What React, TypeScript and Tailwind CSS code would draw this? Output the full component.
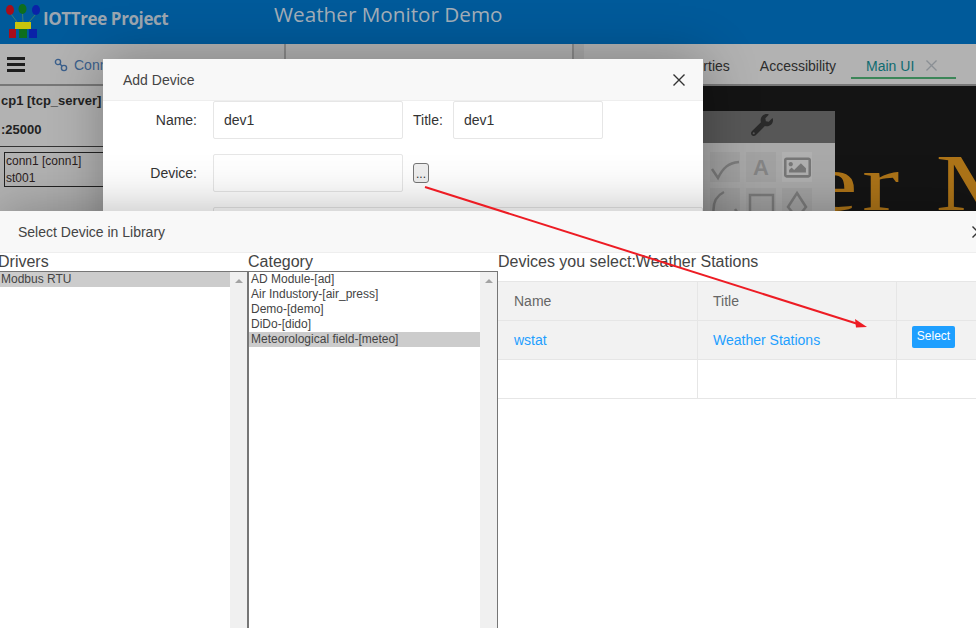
import React from 'react';
import { FaWrench, FaRegImage } from 'react-icons/fa';

const CloseX = ({ size = 12, color = '#333' }: { size?: number; color?: string }) => (
  <svg width={size} height={size} viewBox="0 0 12 12" fill="none" stroke={color} strokeWidth="1.4">
    <path d="M0.5 0.5 L11.5 11.5 M11.5 0.5 L0.5 11.5" />
  </svg>
);

const Logo = () => (
  <svg width="36" height="36" viewBox="0 0 36 36" className="shrink-0">
    <path d="M5 10 L11 18 M16.500 9 L17 18 M30 10 L23 18" stroke="#3f7f6f" strokeWidth="1" fill="none" />
    <ellipse cx="4" cy="6" rx="4" ry="5" fill="#a80d1a" />
    <ellipse cx="16.500" cy="5" rx="4" ry="5" fill="#0d6e1e" />
    <ellipse cx="30" cy="6" rx="4" ry="5" fill="#0a22a8" />
    <rect x="9" y="18" width="16" height="7" fill="#c8c40c" />
    <rect x="3" y="25" width="7" height="9" fill="#a80d1a" />
    <rect x="13" y="25" width="8" height="9" fill="#0d6e1e" />
    <rect x="23" y="25" width="8" height="9" fill="#0a22a8" />
  </svg>
);

const ScrollTrack = () => (
  <div className="w-[17px] shrink-0 bg-[#f0f0f0] flex justify-center pt-[7px]">
    <div className="w-0 h-0 border-l-[4px] border-r-[4px] border-b-[4px] border-l-transparent border-r-transparent border-b-[#a3a3a3]" />
  </div>
);

const ListBox = ({ items, selected, className }: { items: string[]; selected: string; className: string }) => (
  <div className={`flex h-[357px] border border-[#767676] border-b-0 ${className}`}>
    <div className="flex-1 text-[12px] leading-[15px] text-[#444]">
      {items.map((item) => (
        <div key={item} className={`h-[15px] pl-[2px] whitespace-nowrap ${item === selected ? 'bg-[#cccccc]' : ''}`}>
          {item}
        </div>
      ))}
    </div>
    <ScrollTrack />
  </div>
);

const Field = ({ value, className }: { value?: string; className: string }) => (
  <div className={`h-[38px] border border-[#e6e6e6] rounded-[2px] bg-white pl-[10px] text-[14px] leading-[36px] text-[#333] ${className}`}>
    {value}
  </div>
);

const ToolCell = ({ children, light }: { children?: React.ReactNode; light?: boolean }) => (
  <div className={`w-[30px] h-[30px] flex items-center justify-center ${light ? 'bg-[#b0b0b0]' : 'bg-[#a2a2a2]'}`}>{children}</div>
);

export default function App() {
  return (
    <div className="relative w-[976px] h-[628px] overflow-hidden bg-[#b2b2b2] font-['Liberation_Sans',Arial,sans-serif]">
      <div className="flex items-start h-[44px] bg-[#005a9a]">
        <div className="flex items-start pl-[6px] pt-[4px] w-[274px]">
          <Logo />
          <span className="ml-px mt-[2px] text-[17px] leading-[26px] font-bold text-[#9ca6b0] font-['Open_Sans',sans-serif] tracking-[-0.4px]">IOTTree Project</span>
        </div>
        <span className="text-[20.700px] leading-[29px] text-[#a3aeb8] font-['Open_Sans',sans-serif]">Weather Monitor Demo</span>
      </div>

      <div className="flex h-[584px]">
        <div className="w-[286px] shrink-0 border-r-2 border-[#8a8a8a]">
          <div className="flex items-center h-[42px] border-b-2 border-[#777] pl-[7px]">
            <div className="flex flex-col gap-[3px] w-[18px]">
              <div className="h-[3px] bg-[#1d1d1d]" />
              <div className="h-[3px] bg-[#1d1d1d]" />
              <div className="h-[3px] bg-[#1d1d1d]" />
            </div>
            <svg width="14" height="14" viewBox="0 0 14 14" fill="none" stroke="#3a5f8c" strokeWidth="1.4" className="ml-[29px] mt-[2px]">
              <circle cx="4" cy="4" r="2.6" />
              <circle cx="10" cy="10" r="2.600" />
              <path d="M6 6 L8 8" />
            </svg>
            <span className="ml-[6px] pt-[3px] text-[14px] text-[#3a5f8c]">Connections</span>
          </div>
          <div className="h-[29px] pl-px text-[13px] font-bold leading-[29px] text-[#222] whitespace-nowrap">cp1 [tcp_server]</div>
          <div className="h-[31px] pl-px text-[13px] font-bold leading-[30px] text-[#222]">:25000</div>
          <div className="border-t border-[#333] pt-[5px] pl-[4px]">
            <div className="w-[130px] h-[35px] border border-[#222] text-[12px] leading-[17px] text-[#2a1c1c] pl-px">
              <div>conn1 [conn1]</div>
              <div>st001</div>
            </div>
          </div>
        </div>

        <div className="w-[288px] shrink-0 border-r-2 border-[#8a8a8a]" />
        <div className="w-[10px] shrink-0 bg-[#a8a8a8]" />

        <div className="flex-1 flex flex-col">
          <div className="flex h-[42px] border-b-2 border-[#777] pl-[67px] text-[14px] text-[#2c2c2c]">
            <div className="px-[15px] pt-[12px] whitespace-nowrap">Properties</div>
            <div className="px-[15px] pt-[12px] whitespace-nowrap">Accessibility</div>
            <div className="w-[105px] h-[35px] border-b-2 border-[#3c8658] pl-[15px] pt-[12px] flex items-start text-[#0f6b70] whitespace-nowrap">
              Main UI
              <span className="ml-[12px] mt-[4px]"><CloseX size={11} color="#8a8f94" /></span>
            </div>
          </div>
          <div className="relative flex-1 bg-[#141414] overflow-hidden">
            <div className="absolute left-[224px] top-[54px] origin-left scale-x-[1.4] text-[80px] leading-[86px] tracking-[3px] text-[#ad7418] whitespace-nowrap font-['Liberation_Serif',serif]">er M</div>
            <div className="absolute left-[119px] top-[25px] w-[132px] h-[200px] bg-[#a9a9a9]">
              <div className="h-[32px] bg-[#575757] flex justify-end pr-[62px] pt-[3px] text-[#2a2a2a]">
                <FaWrench size={22} />
              </div>
              <div className="grid grid-cols-[30px_30px_30px] gap-[6px] pl-[7px] pt-[9px]">
                <ToolCell>
                  <svg width="30" height="30" viewBox="0 0 30 30" fill="none" stroke="#7c7c7c" strokeWidth="2.5">
                    <path d="M2 17 L8 26 C13 16 18 11 29 10" />
                  </svg>
                </ToolCell>
                <ToolCell><span className="text-[22px] font-bold text-[#858585]">A</span></ToolCell>
                <ToolCell light><FaRegImage size={27} color="#777" /></ToolCell>
                <ToolCell>
                  <svg width="30" height="30" viewBox="0 0 30 30" fill="none" stroke="#7c7c7c" strokeWidth="2.5">
                    <path d="M14 4 C6 8 2 16 4 28" />
                    <path d="M25 21 L27 24" />
                  </svg>
                </ToolCell>
                <ToolCell>
                  <svg width="30" height="30" viewBox="0 0 30 30" fill="none" stroke="#7c7c7c" strokeWidth="2.5">
                    <rect x="4" y="7" width="23" height="23" />
                  </svg>
                </ToolCell>
                <ToolCell>
                  <svg width="30" height="30" viewBox="0 0 30 30" fill="none" stroke="#7c7c7c" strokeWidth="2.5">
                    <path d="M15 5 L24 19 L15 30 L6 19 Z" />
                  </svg>
                </ToolCell>
              </div>
            </div>
          </div>
        </div>
      </div>

      {/* first dialog */}
      <div className="absolute left-[103px] top-[59px] w-[600px] h-[300px] bg-white shadow-[1px_1px_50px_rgba(0,0,0,0.3)]">
        <div className="flex items-center justify-between h-[42px] pt-px bg-[#f8f8f8] border-b border-[#eeeeee] pl-[20px] pr-[18px] text-[14px] text-[#444]">
          Add Device
          <CloseX />
        </div>
        <div className="flex items-start text-[14px] text-[#333]">
          <div className="w-[94px] text-right leading-[38px]">Name:</div>
          <Field value="dev1" className="ml-[16px] w-[190px]" />
          <div className="w-[40px] ml-[10px] leading-[38px]">Title:</div>
          <Field value="dev1" className="w-[150px]" />
        </div>
        <div className="flex items-start mt-[15px] text-[14px] text-[#333]">
          <div className="w-[94px] text-right leading-[38px]">Device:</div>
          <Field className="ml-[16px] w-[190px]" />
          <div className="ml-[10px] mt-[9px] w-[16px] h-[20px] border border-[#767676] rounded-[3px] bg-[#efefef] text-[12px] leading-[20px] text-center text-[#333]">...</div>
        </div>
        <Field className="ml-[110px] mt-[15px] w-[490px]" />
      </div>

      {/* second dialog */}
      <div className="absolute left-0 top-[211px] w-[976px] h-[417px] bg-white shadow-[1px_1px_50px_rgba(0,0,0,0.3)] overflow-hidden">
        <div className="flex items-center justify-between h-[42px] pt-px bg-[#f8f8f8] border-b border-[#eeeeee] pl-[18px] text-[14px] text-[#444]">
          Select Device in Library
          <span className="-mr-[8px] shrink-0"><CloseX /></span>
        </div>
        <div className="flex text-[#444]">
          <div className="w-[250px] -ml-[2px] shrink-0">
            <div className="h-[18px] text-[16px] leading-[18px]">Drivers</div>
            <ListBox items={['Modbus RTU']} selected="Modbus RTU" className="w-[250px]" />
          </div>
          <div className="w-[250px] shrink-0">
            <div className="h-[18px] text-[16px] leading-[18px]">Category</div>
            <ListBox
              items={['AD Module-[ad]', 'Air Industory-[air_press]', 'Demo-[demo]', 'DiDo-[dido]', 'Meteorological field-[meteo]']}
              selected="Meteorological field-[meteo]"
              className="w-[250px]"
            />
          </div>
          <div className="flex-1">
            <div className="h-[28px] text-[16px] leading-[18px]">Devices you select:Weather Stations</div>
            <div className="grid grid-cols-[200px_199px_1fr] text-[14px] border-t border-[#e6e6e6]">
              <div className="h-[39px] bg-[#f2f2f2] border-b border-r border-[#e6e6e6] pl-[16px] leading-[38px] text-[#666]">Name</div>
              <div className="h-[39px] bg-[#f2f2f2] border-b border-r border-[#e6e6e6] pl-[15px] leading-[38px] text-[#666]">Title</div>
              <div className="h-[39px] bg-[#f2f2f2] border-b border-[#e6e6e6]" />
              <div className="h-[39px] bg-[#f2f2f2] border-b border-r border-[#e6e6e6] pl-[16px] leading-[38px] text-[#1e9fff]">wstat</div>
              <div className="h-[39px] bg-[#f2f2f2] border-b border-r border-[#e6e6e6] pl-[15px] leading-[38px] text-[#1e9fff]">Weather Stations</div>
              <div className="h-[39px] bg-[#f2f2f2] border-b border-[#e6e6e6] pl-[15px] pt-[5px]">
                <div className="w-[43px] h-[22px] rounded-[2px] bg-[#1e9fff] text-white text-[12px] leading-[20px] text-center">Select</div>
              </div>
              <div className="h-[39px] border-b border-r border-[#e6e6e6]" />
              <div className="h-[39px] border-b border-r border-[#e6e6e6]" />
              <div className="h-[39px] border-b border-[#e6e6e6]" />
            </div>
          </div>
        </div>
      </div>

      {/* annotation arrow drawn on top of the screenshot */}
      <svg className="absolute left-0 top-0 pointer-events-none" width="976" height="628" viewBox="0 0 976 628">
        <path d="M425 187 L858 324" stroke="#ed1c24" strokeWidth="2" fill="none" />
        <path d="M867 327 L855 319 L856 327.500 Z" fill="#ed1c24" />
      </svg>
    </div>
  );
}
